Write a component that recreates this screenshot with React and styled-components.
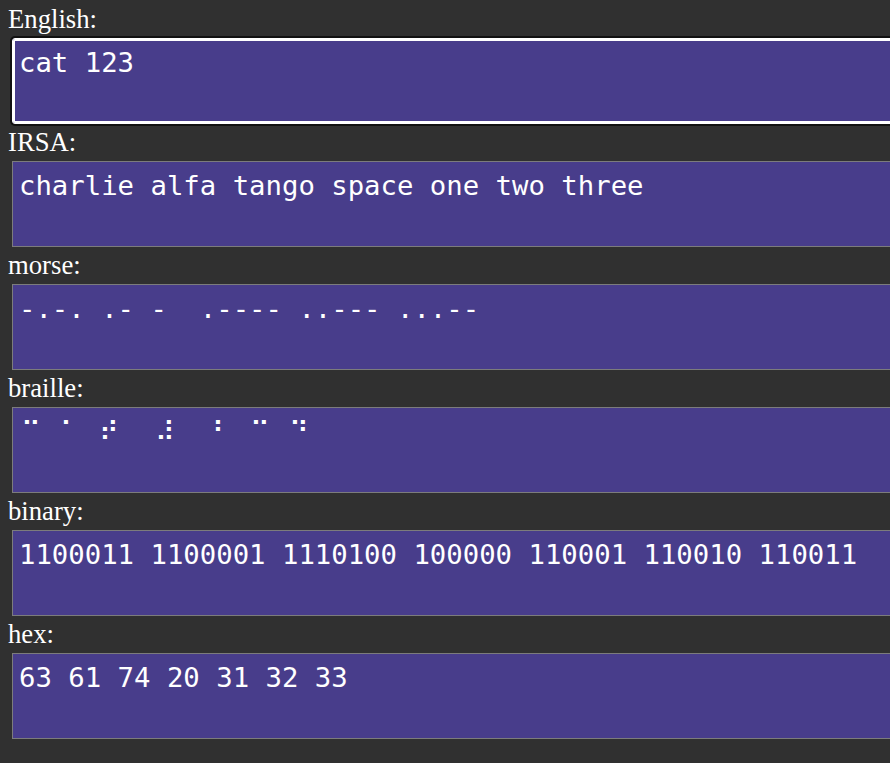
import React from "react";
import styled, { createGlobalStyle, css } from "styled-components";

const GlobalStyle = createGlobalStyle`
  html, body {
    margin: 0;
    padding: 0;
    background: #303030;
    overflow: hidden;
  }
  body {
    font-family: "Liberation Serif", "Times New Roman", serif;
  }
`;

const Page = styled.main`
  display: flex;
  flex-direction: column;
  align-items: flex-start;
  padding: 4px 0 0 8px;
  min-height: 100vh;
  box-sizing: border-box;
`;

const Field = styled.section`
  display: flex;
  flex-direction: column;
  align-items: flex-start;
  margin-bottom: 3px;
`;

const Label = styled.label`
  display: block;
  height: 30px;
  line-height: 30px;
  margin-bottom: 4px;
  font-family: "Liberation Serif", "Times New Roman", serif;
  font-size: 26.7px;
  color: #ffffff;
`;

const Box = styled.textarea`
  display: block;
  box-sizing: border-box;
  width: 900px;
  height: 86px;
  margin: 0 0 0 4px;
  padding: 8px 6px;
  background: #483d8b;
  color: #ffffff;
  border: 1px solid #7c7c7c;
  border-radius: 0;
  font-family: "DejaVu Sans Mono", "Liberation Mono", monospace;
  font-size: 27.3px;
  letter-spacing: ${(p) => p.$spread || 0}px;
  text-indent: ${(p) => p.$indent || 0}px;
  resize: none;
  outline: none;
  overflow: hidden;
  white-space: pre;

  ${(p) =>
    p.$focused &&
    css`
      border: 1px solid #ffffff;
      border-radius: 3px;
      box-shadow: inset 0 0 0 2px #ffffff, 0 0 0 2px #111111;
    `}
`;

const fields = [
  { label: "English:", value: "cat 123", focused: true },
  { label: "IRSA:", value: "charlie alfa tango space one two three" },
  { label: "morse:", value: "-.-. .- -  .---- ..--- ...--" },
  { label: "braille:", value: "⠉ ⠁ ⠞  ⠼  ⠃ ⠉ ⠙", spread: 1.2, indent: 2 },
  { label: "binary:", value: "1100011 1100001 1110100 100000 110001 110010 110011" },
  { label: "hex:", value: "63 61 74 20 31 32 33" },
];

export default function App() {
  return (
    <>
      <GlobalStyle />
      <Page>
        {fields.map((f) => (
          <Field key={f.label}>
            <Label>{f.label}</Label>
            <Box
              readOnly
              value={f.value}
              $focused={f.focused}
              $spread={f.spread}
              $indent={f.indent}
              spellCheck={false}
            />
          </Field>
        ))}
      </Page>
    </>
  );
}
